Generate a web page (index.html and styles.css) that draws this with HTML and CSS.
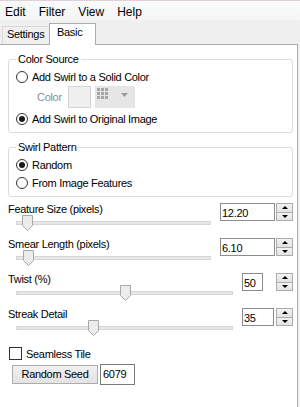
FILE: index.html
```html
<!DOCTYPE html>
<html lang="en">
<head>
  <meta charset="UTF-8">
  <title>Swirl</title>
  <link rel="stylesheet" href="styles.css">
</head>
<body>
  <div class="window">
    <nav class="menubar">
      <span>Edit</span>
      <span>Filter</span>
      <span>View</span>
      <span>Help</span>
    </nav>

    <div class="tabs">
      <div class="tab">Settings</div>
      <div class="tab active">Basic</div>
    </div>

    <div class="panel">
      <!-- Color Source -->
      <fieldset class="group">
        <legend>Color Source</legend>
        <div class="radio first"><span class="mark"></span>Add Swirl to a Solid Color</div>
        <div class="color-row">
          <span class="muted">Color</span>
          <span class="swatch"></span>
          <span class="palette">
            <svg class="grid-icon" width="12" height="12" viewBox="0 0 12 12">
              <rect x="0" y="0" width="3" height="3"/><rect x="4" y="0" width="3" height="3"/><rect x="8" y="0" width="3" height="3"/>
              <rect x="0" y="4" width="3" height="3"/><rect x="4" y="4" width="3" height="3"/><rect x="8" y="4" width="3" height="3"/>
              <rect x="0" y="8" width="3" height="3"/><rect x="4" y="8" width="3" height="3"/><rect x="8" y="8" width="3" height="3"/>
            </svg>
            <svg class="drop-icon" width="7" height="4" viewBox="0 0 7 4"><path d="M0 0 H7 L3.5 4 Z"/></svg>
          </span>
        </div>
        <div class="radio checked"><span class="mark"></span>Add Swirl to Original Image</div>
      </fieldset>

      <!-- Swirl Pattern -->
      <fieldset class="group">
        <legend>Swirl Pattern</legend>
        <div class="radio first checked"><span class="mark"></span>Random</div>
        <div class="radio second"><span class="mark"></span>From Image Features</div>
      </fieldset>

      <div class="slider first">
        <div class="slider-label">Feature Size (pixels)</div>
        <div class="track-row">
          <div class="track"></div>
          <svg class="thumb" style="left: 14px;" width="11" height="16" viewBox="0 0 11 16"><path d="M0.5 0.5 H10.5 V10.5 L5.5 15.5 L0.5 10.5 Z"/></svg>
        </div>
        <div class="spin">
          <div class="spin-box wide">12.20</div>
          <div class="spin-buttons"><span class="up"></span><span class="down"></span></div>
        </div>
      </div>

      <div class="slider">
        <div class="slider-label">Smear Length (pixels)</div>
        <div class="track-row">
          <div class="track"></div>
          <svg class="thumb" style="left: 15px;" width="11" height="16" viewBox="0 0 11 16"><path d="M0.5 0.5 H10.5 V10.5 L5.5 15.5 L0.5 10.5 Z"/></svg>
        </div>
        <div class="spin">
          <div class="spin-box wide">6.10</div>
          <div class="spin-buttons"><span class="up"></span><span class="down"></span></div>
        </div>
      </div>

      <div class="slider">
        <div class="slider-label">Twist (%)</div>
        <div class="track-row">
          <div class="track"></div>
          <svg class="thumb" style="left: 112px;" width="11" height="16" viewBox="0 0 11 16"><path d="M0.5 0.5 H10.5 V10.5 L5.5 15.5 L0.5 10.5 Z"/></svg>
        </div>
        <div class="spin">
          <div class="spin-box short">50</div>
          <div class="spin-buttons"><span class="up"></span><span class="down"></span></div>
        </div>
      </div>

      <div class="slider">
        <div class="slider-label">Streak Detail</div>
        <div class="track-row">
          <div class="track"></div>
          <svg class="thumb" style="left: 80px;" width="11" height="16" viewBox="0 0 11 16"><path d="M0.5 0.5 H10.5 V10.5 L5.5 15.5 L0.5 10.5 Z"/></svg>
        </div>
        <div class="spin">
          <div class="spin-box narrow">35</div>
          <div class="spin-buttons"><span class="up"></span><span class="down"></span></div>
        </div>
      </div>

      <div class="check-row"><span class="checkbox"></span>Seamless Tile</div>

      <div class="seed-row">
        <div class="button">Random Seed</div>
        <div class="seed-box">6079</div>
      </div>
    </div>
  </div>
</body>
</html>
```

FILE: styles.css
```css
* {
  box-sizing: border-box;
}

body {
  margin: 0;
  font-family: "Liberation Sans", Arial, sans-serif;
  font-size: 11px;
  letter-spacing: -0.3px;
  color: #000;
  background-color: #f0f0f0;
}

.window {
  width: 300px;
  height: 407px;
  display: flex;
  flex-direction: column;
  overflow: hidden;
}

/* Menu bar */
.menubar {
  height: 20px;
  display: flex;
  gap: 13px;
  padding: 4px 0 0 5px;
  border-top: 1px solid #e4cfd8;
  background: linear-gradient(#f8fbfb, #f5f5f5);
  font-size: 12px;
  line-height: 14px;
  letter-spacing: 0;
}

/* Tabs */
.tabs {
  height: 24px;
  display: flex;
  align-items: flex-end;
  padding-left: 2px;
}

.tab {
  width: 48px;
  height: 18px;
  padding-left: 4px;
  border: 1px solid #d9d9d9;
  border-bottom: none;
  background: #f0f0f0;
  line-height: 15px;
}

.tab.active {
  position: relative;
  z-index: 1;
  width: 47px;
  height: 22px;
  margin-left: -1px;
  margin-bottom: -1px;
  padding-left: 7px;
  border-color: #acacac;
  background: #fff;
  line-height: 17px;
}

/* Panel */
.panel {
  flex: 1;
  width: 298px;
  padding: 0 4px 0 8px;
  border-top: 1px solid #acacac;
  border-right: 1px solid #acacac;
  background: #fff;
}

.group {
  margin: 7px 0 0;
  padding: 0 6px 5px 7px;
  border: 1px solid #dcdcdc;
  border-radius: 3px;
}

.group legend {
  padding: 0 2px;
  line-height: 14px;
}

.radio {
  display: flex;
  align-items: center;
  gap: 4px;
  height: 16px;
  margin-top: 3px;
}

.radio.second {
  margin-top: 2px;
}

.radio .mark {
  width: 12px;
  height: 12px;
  border: 1px solid #333;
  border-radius: 50%;
  background: #fff;
  display: flex;
  align-items: center;
  justify-content: center;
}

.radio.checked .mark::after {
  content: "";
  width: 6px;
  height: 6px;
  border-radius: 50%;
  background: #1a1a1a;
}

.color-row {
  display: flex;
  align-items: center;
  height: 22px;
  margin-top: 1px;
  padding-left: 21px;
}

.muted {
  color: #8d8d8d;
}

.swatch {
  width: 23px;
  height: 22px;
  margin-left: 6px;
  border: 1px solid #d4d4d4;
  background: #f0f0f0;
}

.palette {
  width: 40px;
  height: 22px;
  margin-left: 4px;
  display: flex;
  align-items: flex-start;
  padding: 2px 0 0 2px;
  background: #e6e6e6;
}

.grid-icon {
  fill: #a6a6a6;
}

.drop-icon {
  fill: #9a9a9a;
  margin: 5px 0 0 12px;
}

/* Sliders */
.slider {
  display: grid;
  grid-template-columns: 1fr auto;
  column-gap: 9px;
  margin-top: 7px;
}

.slider.first {
  margin-top: 5px;
}

.slider-label {
  grid-column: 1;
  line-height: 14px;
}

.track-row {
  grid-column: 1;
  position: relative;
  height: 14px;
  padding: 5px 0 0 8px;
}

.track {
  height: 4px;
  border: 1px solid #d6d6d6;
  background: #e7e7e7;
}

.thumb {
  position: absolute;
  top: -1px;
}

.thumb path {
  fill: #ececec;
  stroke: #a8a8a8;
}

.spin {
  grid-column: 2;
  grid-row: 1 / span 2;
  align-self: start;
  display: flex;
  margin-top: 1px;
}

.spin-box {
  height: 18px;
  padding: 1px 0 0 1px;
  border: 1px solid #8a8c90;
  background: #fff;
  line-height: 16px;
}

.spin-box.wide {
  width: 55px;
  margin-right: 1px;
}

.spin-box.short {
  width: 21px;
  margin-right: 13px;
}

.spin-box.narrow {
  width: 32px;
  margin-right: 2px;
}

.spin-buttons {
  width: 17px;
  height: 18px;
  display: flex;
  flex-direction: column;
}

.spin-buttons span {
  flex: 1;
  display: flex;
  align-items: center;
  justify-content: center;
  border: 1px solid #acacac;
  background: linear-gradient(#f3f3f3, #e3e3e3);
}

.spin-buttons .down {
  border-top: none;
}

.spin-buttons .up::after {
  content: "";
  border-left: 3px solid transparent;
  border-right: 3px solid transparent;
  border-bottom: 3px solid #000;
}

.spin-buttons .down::after {
  content: "";
  border-left: 3px solid transparent;
  border-right: 3px solid transparent;
  border-top: 3px solid #000;
}

/* Bottom controls */
.check-row {
  display: flex;
  align-items: center;
  gap: 4px;
  height: 15px;
  margin-top: 11px;
  padding-left: 1px;
}

.checkbox {
  width: 13px;
  height: 13px;
  border: 1px solid #333;
  background: #fff;
}

.seed-row {
  display: flex;
  align-items: center;
  height: 21px;
  margin-top: 3px;
  padding-left: 4px;
}

.button {
  width: 86px;
  height: 19px;
  border: 1px solid #acacac;
  background: linear-gradient(#f0f0f0, #e3e3e3);
  text-align: center;
  line-height: 17px;
}

.seed-box {
  width: 35px;
  height: 21px;
  margin-left: 2px;
  padding-left: 2px;
  border: 1px solid #7a7a7a;
  background: #fff;
  line-height: 19px;
}
```
